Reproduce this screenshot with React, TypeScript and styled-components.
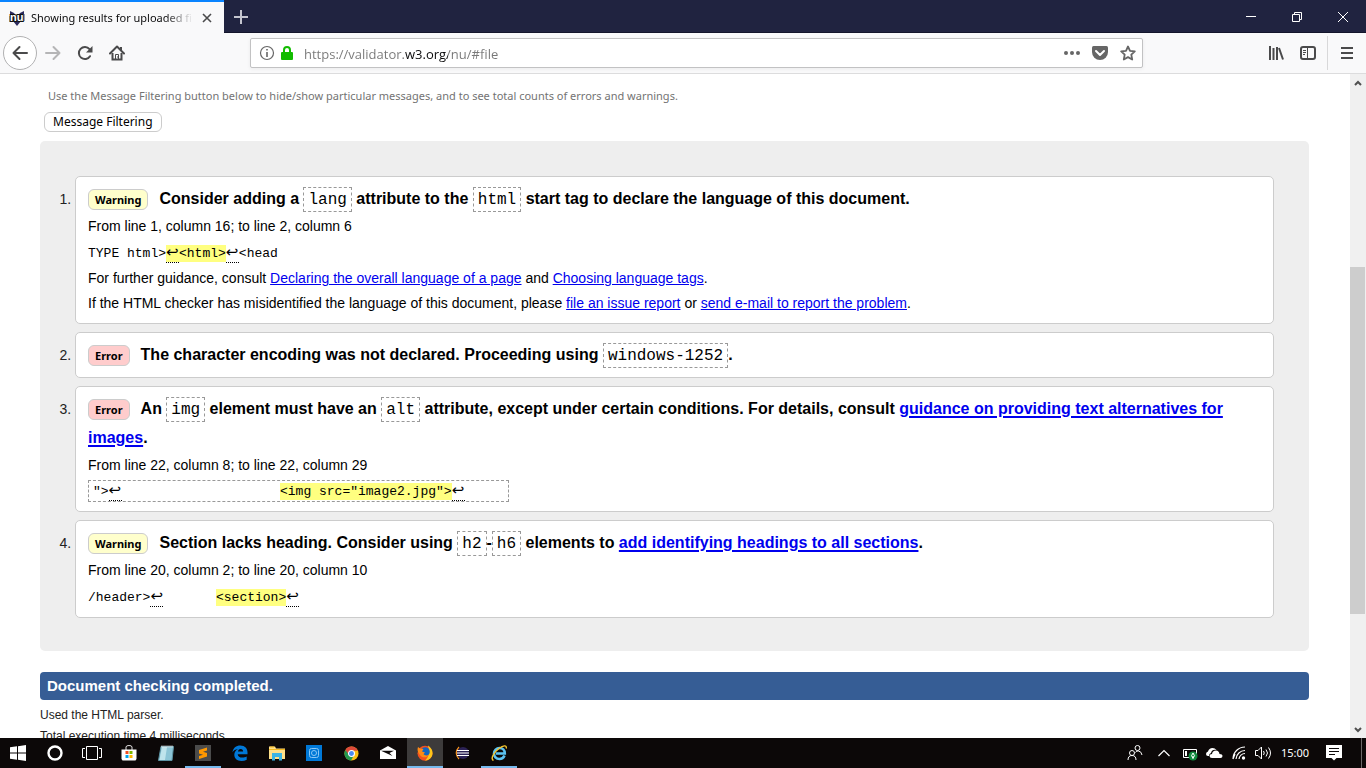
import React from "react";
import styled, { createGlobalStyle, css } from "styled-components";

const ui = `"Noto Sans", "Open Sans", sans-serif`;
const address = `"Open Sans", "Noto Sans", sans-serif`;
const arial = `"Liberation Sans", Arial, sans-serif`;
const mono = `"Liberation Mono", "Courier New", monospace`;

const GlobalStyle = createGlobalStyle`
  * { box-sizing: border-box; }
  body { margin: 0; background: #fff; color: #000; font-family: ${arial}; }
  button { border: 0; padding: 0; background: none; color: inherit; font: inherit; }
`;

const Screen = styled.div`
  display: flex;
  flex-direction: column;
  height: 100vh;
  overflow: hidden;
`;

/* ---------- browser chrome ---------- */

const TitleBar = styled.header`
  display: flex;
  flex: none;
  height: 33px;
  background: #202340;
  box-shadow: inset 0 -1px #13152b;
  color: #fff;
`;

const Tab = styled.div`
  display: flex;
  align-items: center;
  gap: 6px;
  width: 224px;
  padding: 0 9px;
  border-top: 2px solid #0a84ff;
  background: #f9f9fa;
  color: #0c0c0d;
  font: 11px/16px ${ui};
`;

const TabTitle = styled.span`
  flex: 1;
  overflow: hidden;
  white-space: nowrap;
  mask-image: linear-gradient(to left, transparent, #000 28px);
`;

const TitleButton = styled.button<{ $width: number }>`
  display: flex;
  align-items: center;
  justify-content: center;
  width: ${(p) => p.$width}px;
`;

const WindowControls = styled.div`
  display: flex;
  margin-left: auto;
`;

const NavBar = styled.nav`
  display: flex;
  flex: none;
  align-items: center;
  height: 41px;
  padding: 0 3px;
  border-bottom: 1px solid #dcdcdd;
  background: #f9f9fa;
  color: #4a4a4b;
`;

const NavButton = styled.button<{ $dim?: boolean }>`
  display: flex;
  align-items: center;
  justify-content: center;
  width: 32px;
  height: 32px;
  color: ${(p) => (p.$dim ? "#b5b5b6" : "inherit")};
`;

const BackButton = styled(NavButton)`
  width: 34px;
  height: 34px;
  border: 1px solid #b1b1b2;
  border-radius: 50%;
  background: #fff;
`;

const UrlBar = styled.div`
  display: flex;
  flex: 1;
  align-items: center;
  gap: 4px;
  height: 30px;
  margin: 0 117px;
  padding: 0 2px 0 8px;
  border: 1px solid #c2c2c3;
  border-radius: 2px;
  background: #fff;
  box-shadow: 0 1px 4px rgba(0, 0, 0, 0.06);
  color: #666;
`;

const UrlInput = styled.input`
  flex: 1;
  min-width: 0;
  margin-left: 5px;
  padding: 2px 0 0;
  border: 0;
  outline: 0;
  background: linear-gradient(to right, #777 101px, #0c0c0d 101px, #0c0c0d 144px, #777 144px);
  background-clip: text;
  -webkit-text-fill-color: transparent;
  font: 13px/20px ${address};
`;

const UrlAction = styled.button`
  display: flex;
  align-items: center;
  justify-content: center;
  width: 24px;
  height: 24px;
`;

const NavDivider = styled.span`
  width: 1px;
  height: 34px;
  margin: 0 3px;
  background: #d8d8d9;
`;

/* ---------- page ---------- */

const Viewport = styled.div`
  display: flex;
  flex: 1;
  min-height: 0;
`;

const Page = styled.main`
  flex: 1;
  min-width: 0;
  overflow: hidden;
  padding: 12px 41px 0 40px;
`;

const Hint = styled.p`
  margin: 0 8px;
  color: #737373;
  font: 11px/20px ${ui};
`;

const FilterButton = styled.button`
  display: block;
  height: 20px;
  margin: 6px 4px 9px;
  padding: 0 8px;
  border: 1px solid #ccc;
  border-radius: 6px;
  background: #fff;
  font: 12px/18px ${ui};
`;

const Results = styled.ol`
  display: flex;
  flex-direction: column;
  gap: 8px;
  margin: 0 0 21px;
  padding: 35px 35px 33px;
  border-radius: 5px;
  background: #eee;
  font: 14px/25px ${arial};
`;

const Message = styled.li`
  padding: 7px 12px;
  border: 1px solid #ccc;
  border-radius: 5px;
  background: #fff;
  &::marker { color: #222; }
`;

const Summary = styled.p`
  margin: 0 0 1px;
  font-size: 16px;
  line-height: 29px;
  font-weight: bold;
`;

const Line = styled.p`
  margin: 0;
`;

const Badge = styled.strong<{ $kind: "Warning" | "Error" }>`
  display: inline-block;
  height: 21px;
  margin-right: 11px;
  padding: 0 6px;
  border: 1px solid #ccc;
  border-radius: 6px;
  background: ${(p) => (p.$kind === "Error" ? "#fcc" : "#ffc")};
  font: bold 11px/20px ${ui};
`;

const dashed = css`
  border: 1px dashed #999;
  padding: 3px 4px 2px;
`;

const Code = styled.code`
  ${dashed}
  font: 16px ${mono};
`;

const Link = styled.a`
  color: #00e;
  text-decoration: underline;
`;

const BoldLink = styled(Link)`
  text-decoration-thickness: 2px;
  text-underline-offset: 2px;
`;

const Extract = styled.pre<{ $boxed?: boolean }>`
  margin: 0;
  padding-top: ${(p) => (p.$boxed ? 1 : 2)}px;
  font: 13px/25px ${mono};
  tab-size: 64px;
  code {
    font: inherit;
    ${(p) => p.$boxed && dashed}
  }
`;

const Mark = styled.mark`
  padding: 1px 0;
  background: #ffff80;
  color: inherit;
`;

const Return = styled.span`
  display: inline-block;
  overflow: hidden;
  width: 13px;
  height: 17px;
  border-bottom: 1px dotted #000;
  font: 15px/12px "DejaVu Sans", sans-serif;
  vertical-align: -6px;
`;

const Completed = styled.p`
  margin: 0 0 5px;
  padding: 0 7px;
  border-radius: 4px;
  background: #365d95;
  color: #fff;
  font: bold 15px/28px ${arial};
`;

const Detail = styled.p`
  margin: 0;
  color: #222;
  font: 12px/21px ${arial};
`;

/* ---------- scroll bar ---------- */

const ScrollBar = styled.div`
  display: flex;
  flex: none;
  flex-direction: column;
  width: 16px;
  background: #f0f0f0;
  color: #505050;
`;

const ScrollButton = styled.button`
  display: flex;
  align-items: center;
  justify-content: center;
  height: 17px;
`;

const Track = styled.div<{ $share: number; $thumb?: boolean }>`
  flex: ${(p) => p.$share};
  margin-right: 1px;
  background: ${(p) => (p.$thumb ? "#cdcdcd" : "transparent")};
`;

/* ---------- task bar ---------- */

const TaskBar = styled.footer`
  display: flex;
  flex: none;
  height: 30px;
  background: #0c0808;
  color: #fff;
`;

const Task = styled.button<{ $open?: boolean; $active?: boolean }>`
  display: flex;
  align-items: center;
  justify-content: center;
  width: 36px;
  margin-right: 1px;
  background: ${(p) => (p.$active ? "#3d3b3b" : "transparent")};
  box-shadow: ${(p) => (p.$open ? "inset 0 -2px #76b9ed" : "none")};
`;

const Tray = styled.div`
  display: flex;
  align-items: center;
  margin-left: auto;
  border-right: 1px solid #6b6868;
  margin-right: 4px;
  padding-right: 9px;
`;

const TrayItem = styled.button<{ $width: number }>`
  display: flex;
  align-items: center;
  justify-content: center;
  width: ${(p) => p.$width}px;
  height: 30px;
  font: 11px/16px ${ui};
`;

const Svg = ({ w = 16, h = w, box, children }: { w?: number; h?: number; box?: string; children: React.ReactNode }) => (
  <svg width={w} height={h} viewBox={box ?? `0 0 ${w} ${h}`} fill="none" stroke="currentColor" aria-hidden="true">
    {children}
  </svg>
);

const LogoText = styled.text`
  fill: #fff;
  stroke: #111;
  stroke-width: 2px;
  paint-order: stroke;
  font: bold 11px ${arial};
`;

const Logo = () => (
  <Svg>
    <path d="M1 1l4 2 3 4 3-4 4-2v8l-3 2-4 5-4-5-3-2z" fill="#2b2a5c" stroke="none" />
    <path d="M0 6h2v6H0zM14 4h2v7h-2z" fill="#a9a9b0" stroke="none" />
    <LogoText x="1" y="11">nu</LogoText>
  </Svg>
);

const ReturnMark = () => <Return title="newline">↩</Return>;

const tasks: { name: string; open?: boolean; active?: boolean; icon: React.ReactNode }[] = [
  {
    name: "Start",
    icon: <Svg><path d="M0 2.3L7 1.3V7.500H0zM8 1.200L16 0V7.500H8zM0 8.500H7V14.700L0 13.700zM8 8.500H16V16L8 14.800z" fill="#fff" stroke="none" /></Svg>,
  },
  { name: "Cortana", icon: <Svg><circle cx="8" cy="8" r="6.500" strokeWidth="2.400" /></Svg> },
  {
    name: "Task View",
    icon: <Svg w={20} h={16}><path d="M4.500 1.500h11v13h-11zM3 3.500H.500v9H3M17 3.500h2.500v9H17" /></Svg>,
  },
  {
    name: "Store",
    icon: (
      <Svg>
        <path d="M5 5V2q0-1.500 3-1.500T11 2v3" stroke="#ddd" />
        <path d="M.500 4.500h15V14l-1 1.500h-13L.500 14z" fill="#fff" stroke="none" />
        <path d="M4.500 6h3v3h-3z" fill="#f25022" stroke="none" />
        <path d="M8.500 6h3v3h-3z" fill="#7fba00" stroke="none" />
        <path d="M4.500 10h3v3h-3z" fill="#00a4ef" stroke="none" />
        <path d="M8.500 10h3v3h-3z" fill="#ffb900" stroke="none" />
      </Svg>
    ),
  },
  {
    name: "Notepad",
    icon: (
      <Svg>
        <path d="M3 1.500h12.500L14 15.500H.500z" fill="#8cc5d6" stroke="#5d93a3" />
        <path d="M4 2h5L7 15H1.500z" fill="#bfe4ec" stroke="none" />
        <path d="M3.500 1.500h12" stroke="#eee" strokeWidth="2" strokeDasharray="1 1" />
      </Svg>
    ),
  },
  {
    name: "Sublime Text",
    open: true,
    icon: (
      <Svg>
        <path d="M0 0h16v16H0z" fill="#4b4b4b" stroke="none" />
        <path d="M12 2.500v3L8 6.800l4 1.300v3.400l-8 2.500v-3l4-1.300-4-1.300V5z" fill="#ff9800" stroke="none" />
      </Svg>
    ),
  },
  {
    name: "Edge",
    icon: (
      <Svg>
        <path d="M.500 7.200C1 3 4 .500 8.300.500c4.700 0 7.200 3.100 7.200 6.700v2H5.700c.2 2.400 2.100 3.400 4.500 3.400 1.700 0 3.200-.5 4.500-1.200v3.300c-1.500.8-3.200 1.200-5.200 1.200-4.500 0-7.200-2.600-7.200-6.200 0-2.500 1.400-4.600 3.700-5.800C3.300 4.200 1.600 5.300.500 7.200zM5.900 6.600h5.200c0-1.700-.8-2.700-2.400-2.700S6.100 5.100 5.900 6.600z" fill="#0078d7" stroke="none" />
      </Svg>
    ),
  },
  {
    name: "File Explorer",
    icon: (
      <Svg>
        <path d="M0 1.500h6l1 2h9V14H0z" fill="#ffe08a" stroke="none" />
        <path d="M1 2h4M0 4.500h16" stroke="#f5b921" />
        <path d="M3 8h10v7.500h-3V12H6v3.500H3z" fill="#3bb4e5" stroke="none" />
      </Svg>
    ),
  },
  {
    name: "Camera",
    icon: (
      <Svg>
        <path d="M0 0h16v16H0z" fill="#0078d7" stroke="none" />
        <rect x="3.500" y="3.500" width="9" height="9" rx="2" stroke="#8cc8f5" />
        <circle cx="8" cy="8" r="2.500" stroke="#8cc8f5" />
      </Svg>
    ),
  },
  {
    name: "Chrome",
    icon: (
      <Svg w={15} box="0 0 16 16">
        <circle cx="8" cy="8" r="7.500" fill="#fbbf16" stroke="none" />
        <path d="M8 8L1.500 4.200A7.500 7.500 0 0 0 7.500 15.500L11 9z" fill="#23994f" stroke="none" />
        <path d="M1.500 4.200A7.500 7.500 0 0 1 14.800 5H8L5 9z" fill="#de4a3b" stroke="none" />
        <circle cx="8" cy="8" r="3.200" fill="#4a8af4" stroke="#fff" strokeWidth="1.200" />
      </Svg>
    ),
  },
  {
    name: "Mail",
    icon: (
      <Svg>
        <path d="M0 5.500L8 1l8 4.500V14H0z" fill="#fff" stroke="none" />
        <path d="M1 5.700h13L9.500 8l3 3z" fill="#0c0808" stroke="none" />
      </Svg>
    ),
  },
  {
    name: "Firefox",
    open: true,
    active: true,
    icon: (
      <Svg>
        <circle cx="8" cy="8.300" r="7.500" fill="#f4511e" stroke="none" />
        <path d="M11 .5c3 2 5 5 4.500 8.500-.5 4-4 6.500-7.500 6.500C11 13 13 9 11 .5z" fill="#ffc61a" stroke="none" />
        <circle cx="8.300" cy="6.800" r="4.500" fill="#1565c0" stroke="none" />
        <path d="M1 2l2 1.500L6.500 4 5 6.500l3 1L6.500 9c1.500 2 4 1.700 5.500.5-1 3.500-7 4-9.500 0S.5 4 1 2z" fill="#ff8a16" stroke="none" />
      </Svg>
    ),
  },
  {
    name: "Eclipse",
    icon: (
      <Svg w={14} box="0 0 14 14">
        <path d="M4 1Q-1.500 7 4 13" stroke="#f7941e" strokeWidth="1.200" />
        <circle cx="8" cy="7" r="6" fill="#2c2255" stroke="none" />
        <path d="M2 4.500h12M2 7h12M2 9.500h12" stroke="#fff" strokeWidth="1.200" />
      </Svg>
    ),
  },
  {
    name: "Internet Explorer",
    open: true,
    icon: (
      <Svg>
        <path d="M13.500 10.500C12.500 13 10.700 14 8.500 14 5 14 3 11.500 3 8.500S5.500 3 8.500 3s5.300 2 5.300 5.500H5" stroke="#5cc3f2" strokeWidth="2.600" />
        <path d="M2.500 15.500C-1 14 3 7 8 3.500c4-3 8-4 7.200 0" stroke="#f8c62c" strokeWidth="1.400" />
      </Svg>
    ),
  },
];

export default function App() {
  return (
    <Screen>
      <GlobalStyle />
      <TitleBar>
        <Tab>
          <Logo />
          <TabTitle>Showing results for uploaded file</TabTitle>
          <TitleButton $width={16} aria-label="Close tab">
            <Svg w={10}><path d="M1 1l8 8M9 1L1 9" stroke="#4a4a4b" strokeWidth="1.600" /></Svg>
          </TitleButton>
        </Tab>
        <TitleButton $width={34} aria-label="New tab">
          <Svg w={14}><path d="M7 0v14M0 7h14" stroke="#c4c5cf" strokeWidth="2" /></Svg>
        </TitleButton>
        <WindowControls>
          <TitleButton $width={46} aria-label="Minimize"><Svg w={10}><path d="M0 4.500h10" /></Svg></TitleButton>
          <TitleButton $width={46} aria-label="Restore"><Svg w={10}><path d="M.5 2.500h7v7h-7zM2.500 2.500v-2h7v7h-2" /></Svg></TitleButton>
          <TitleButton $width={46} aria-label="Close"><Svg w={10}><path d="M0 0l10 10M10 0L0 10" /></Svg></TitleButton>
        </WindowControls>
      </TitleBar>

      <NavBar>
        <BackButton aria-label="Back">
          <Svg><path d="M15 8H1.500M7.500 2L1.500 8l6 6" strokeWidth="2" strokeLinecap="round" strokeLinejoin="round" /></Svg>
        </BackButton>
        <NavButton $dim aria-label="Forward">
          <Svg><path d="M1 8h13.500M8.500 2l6 6-6 6" strokeWidth="2" strokeLinecap="round" strokeLinejoin="round" /></Svg>
        </NavButton>
        <NavButton aria-label="Reload">
          <Svg>
            <path d="M13 11.200A6 6 0 1 1 12.500 4.200" strokeWidth="2" strokeLinecap="round" />
            <path d="M15.500 1v6.500H9z" fill="currentColor" stroke="none" />
          </Svg>
        </NavButton>
        <NavButton aria-label="Home">
          <Svg>
            <path d="M1 8.500L8 1.500l7 7" strokeWidth="2" strokeLinecap="round" strokeLinejoin="round" />
            <path d="M3.500 8v6.500h9V8M12 2v3" strokeWidth="2" />
            <path d="M6.500 14V9.500h3V14M8.500 11.500v1" strokeWidth="1" />
          </Svg>
        </NavButton>
        <UrlBar>
          <Svg>
            <circle cx="8" cy="8" r="6.500" strokeWidth="1.200" />
            <path d="M8 7v5M8 4v1.600" strokeWidth="1.600" />
          </Svg>
          <Svg>
            <path d="M5 8V5a3 3 0 0 1 6 0v3" stroke="#12bc00" strokeWidth="2" />
            <rect x="2" y="7" width="12" height="8" rx="1" fill="#12bc00" stroke="none" />
          </Svg>
          <UrlInput aria-label="Address" defaultValue="https://validator.w3.org/nu/#file" />
          <UrlAction aria-label="Page actions">
            <Svg><g fill="currentColor" stroke="none"><circle cx="2" cy="8" r="2" /><circle cx="8" cy="8" r="2" /><circle cx="14" cy="8" r="2" /></g></Svg>
          </UrlAction>
          <UrlAction aria-label="Save to Pocket">
            <Svg>
              <path d="M1.500 1h13Q16 1 16 2.500V7A8 8 0 0 1 0 7V2.500Q0 1 1.500 1z" fill="currentColor" stroke="none" />
              <path d="M4 6l4 4 4-4" stroke="#fff" strokeWidth="2" strokeLinecap="round" strokeLinejoin="round" />
            </Svg>
          </UrlAction>
          <UrlAction aria-label="Bookmark">
            <Svg><path d="M8 1.500l2 4.300 4.800.6-3.500 3.300.9 4.800L8 12.100l-4.200 2.400.9-4.800L1.200 6.400 6 5.800z" strokeWidth="1.800" strokeLinejoin="round" /></Svg>
          </UrlAction>
        </UrlBar>
        <NavButton aria-label="Library">
          <Svg><path d="M2 1v14M5.500 3v12M9 2v13M11 3l4 11.500" strokeWidth="2" /></Svg>
        </NavButton>
        <NavButton aria-label="Sidebar">
          <Svg>
            <rect x="1" y="2" width="14" height="12" rx="2" strokeWidth="2" />
            <path d="M7.500 2v12" />
            <path d="M3 5.500h3M3 7.500h3M3 9.500h2" />
          </Svg>
        </NavButton>
        <NavDivider />
        <NavButton aria-label="Menu">
          <Svg><path d="M2 3h12M2 8h12M2 13h12" strokeWidth="2" /></Svg>
        </NavButton>
      </NavBar>

      <Viewport>
        <Page>
          <Hint>
            Use the Message Filtering button below to hide/show particular messages, and to see total counts of errors and warnings.
          </Hint>
          <FilterButton>Message Filtering</FilterButton>

          <Results>
            <Message>
              <Summary>
                <Badge $kind="Warning">Warning</Badge>
                Consider adding a <Code>lang</Code> attribute to the <Code>html</Code> start tag to declare the language of this document.
              </Summary>
              <Line>From line 1, column 16; to line 2, column 6</Line>
              <Extract>
                <code>{"TYPE html>"}<Mark><ReturnMark />{"<html>"}</Mark><ReturnMark />{"<head"}</code>
              </Extract>
              <Line>
                For further guidance, consult <Link href="#language">Declaring the overall language of a page</Link> and{" "}
                <Link href="#tags">Choosing language tags</Link>.
              </Line>
              <Line>
                If the HTML checker has misidentified the language of this document, please{" "}
                <Link href="#issue">file an issue report</Link> or <Link href="#mail">send e-mail to report the problem</Link>.
              </Line>
            </Message>

            <Message>
              <Summary>
                <Badge $kind="Error">Error</Badge>
                The character encoding was not declared. Proceeding using <Code>windows-1252</Code>.
              </Summary>
            </Message>

            <Message>
              <Summary>
                <Badge $kind="Error">Error</Badge>
                An <Code>img</Code> element must have an <Code>alt</Code> attribute, except under certain conditions. For details, consult{" "}
                <BoldLink href="#alt">guidance on providing text alternatives for images</BoldLink>.
              </Summary>
              <Line>From line 22, column 8; to line 22, column 29</Line>
              <Extract $boxed>
                <code>{'">'}<ReturnMark />{"\t\t\t"}<Mark>{'<img src="image2.jpg">'}</Mark><ReturnMark />{"     "}</code>
              </Extract>
            </Message>

            <Message>
              <Summary>
                <Badge $kind="Warning">Warning</Badge>
                Section lacks heading. Consider using <Code>h2</Code>-<Code>h6</Code> elements to{" "}
                <BoldLink href="#headings">add identifying headings to all sections</BoldLink>.
              </Summary>
              <Line>From line 20, column 2; to line 20, column 10</Line>
              <Extract>
                <code>{"/header>"}<ReturnMark />{"\t"}<Mark>{"<section>"}</Mark><ReturnMark /></code>
              </Extract>
            </Message>
          </Results>

          <Completed>Document checking completed.</Completed>
          <Detail>Used the HTML parser.</Detail>
          <Detail>Total execution time 4 milliseconds.</Detail>
        </Page>

        <ScrollBar>
          <ScrollButton aria-label="Scroll up"><Svg w={8}><path d="M1 6l3-3 3 3" strokeWidth="2" /></Svg></ScrollButton>
          <Track $share={176} />
          <Track $share={348} $thumb />
          <Track $share={107} />
          <ScrollButton aria-label="Scroll down"><Svg w={8}><path d="M1 2l3 3 3-3" strokeWidth="2" /></Svg></ScrollButton>
        </ScrollBar>
      </Viewport>

      <TaskBar>
        {tasks.map((t) => (
          <Task key={t.name} aria-label={t.name} $open={t.open} $active={t.active}>{t.icon}</Task>
        ))}
        <Tray>
          <TrayItem $width={30} aria-label="People">
            <Svg>
              <circle cx="5" cy="8" r="2.500" /><path d="M1 15q0-4.500 4-4.500T9 15" />
              <circle cx="10.500" cy="3" r="2.500" /><path d="M8.500 7.500q1-2 3-1.500 3 .5 3.500 4" />
            </Svg>
          </TrayItem>
          <TrayItem $width={28} aria-label="Show hidden icons">
            <Svg w={12}><path d="M.500 9L6 3.500 11.500 9" strokeWidth="1.200" /></Svg>
          </TrayItem>
          <TrayItem $width={24} aria-label="Battery">
            <Svg>
              <path d="M1.500 4.500h13v8h-13z" /><path d="M3 6h2v5H3z" fill="#fff" stroke="none" />
              <circle cx="11" cy="11" r="4.500" fill="#10893e" stroke="none" />
              <path d="M11 8q3 3 0 5-3-2 0-5zM11 11v3" />
            </Svg>
          </TrayItem>
          <TrayItem $width={24} aria-label="OneDrive">
            <Svg w={17} h={12}>
              <path d="M3 9H2Q0 9 0 7t2-2.500Q3 1 6.500 1 9 1 10.500 3 6 2 5 6 3 6.500 3 9z" fill="#fff" stroke="none" />
              <path d="M6 11q-2.500 0-2.500-2T6 7q.5-3.500 4-3.500 3 0 3.500 3.500 3 0 3 2t-2 2z" fill="#fff" stroke="none" />
            </Svg>
          </TrayItem>
          <TrayItem $width={26} aria-label="Network">
            <Svg w={14}>
              <path d="M1 13A12 12 0 0 1 13 1M4 13A9 9 0 0 1 13 4.500M7 13A6 6 0 0 1 13 7.500M1 13L3 8" strokeWidth="1.200" />
              <circle cx="11.500" cy="12" r="1.700" fill="#fff" stroke="none" />
            </Svg>
          </TrayItem>
          <TrayItem $width={22} aria-label="Volume">
            <Svg w={17} h={14}>
              <path d="M.500 4.500H3L6.500 1v12L3 9.500H.500z" />
              <path d="M8.500 5q1.500 2 0 4M11 3.500q3 3.500 0 7M13.500 1.500q4 5.500 0 11" />
            </Svg>
          </TrayItem>
          <TrayItem $width={42}>15:00</TrayItem>
          <TrayItem $width={36} aria-label="Notifications">
            <Svg>
              <path d="M0 0h16v13h-5.500L8 15.500 5.500 13H0z" fill="#fff" stroke="none" />
              <path d="M3 3.500h10M3 6.500h10M3 9.500h6" stroke="#0c0808" />
            </Svg>
          </TrayItem>
        </Tray>
      </TaskBar>
    </Screen>
  );
}
